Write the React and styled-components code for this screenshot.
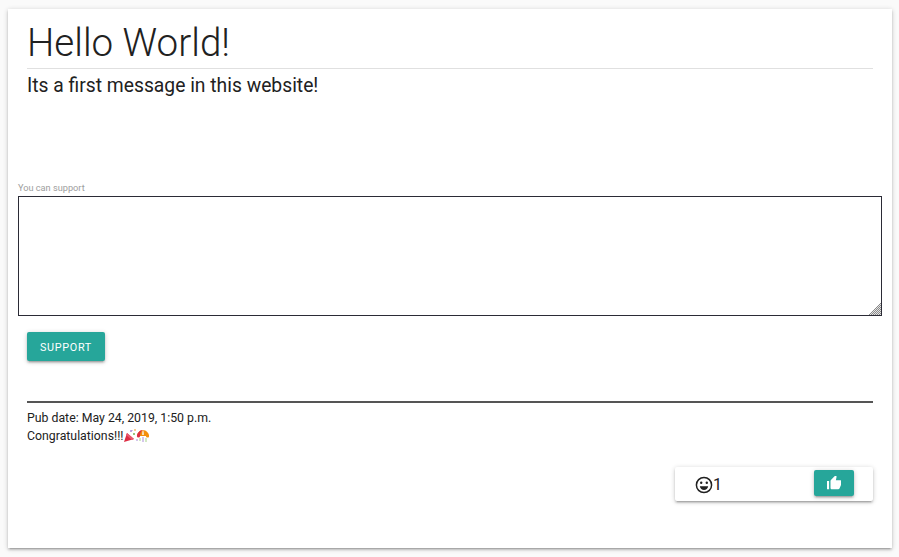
import React from 'react';
import styled, { createGlobalStyle } from 'styled-components';

const GlobalStyle = createGlobalStyle`
  html, body {
    margin: 0;
    padding: 0;
    background: #fafafa;
    color: rgba(0, 0, 0, 0.87);
    font-family: Roboto, "Liberation Sans", sans-serif;
    overflow: hidden;
  }
  * {
    box-sizing: border-box;
  }
`;

const Page = styled.div`
  width: 899px;
  height: 557px;
  padding: 9px 7px 9px 8px;
`;

const Card = styled.main`
  height: 539px;
  padding: 0 10px;
  background: #fff;
  box-shadow: 0 2px 2px 0 rgba(0, 0, 0, 0.14), 0 3px 1px -2px rgba(0, 0, 0, 0.12),
    0 1px 5px 0 rgba(0, 0, 0, 0.2);
`;

const Section = styled.section`
  padding: 0 9px;
`;

const Title = styled.h1`
  margin: 0;
  height: 60px;
  border-bottom: 1px solid #e0e0e0;
  font-size: 38.6px;
  font-weight: 300;
  line-height: 67px;
  color: #212121;
`;

const Lead = styled.p`
  margin: 0;
  height: 110px;
  font-size: 19.3px;
  font-weight: 400;
  line-height: 33px;
  color: #212121;
`;

const Label = styled.label`
  display: block;
  height: 17px;
  font-size: 9.2px;
  line-height: 17px;
  color: #9e9e9e;
`;

const Message = styled.textarea`
  display: block;
  width: 100%;
  height: 120px;
  margin: 0;
  padding: 0;
  background: #fff;
  border: 1px solid #2b2b36;
  border-radius: 0;
  outline: none;

  &::-webkit-resizer {
    background: linear-gradient(135deg, #fff 58%, transparent 58%),
      repeating-conic-gradient(#8a8a8a 0 25%, #e4e4e4 0 50%) 0 0 / 2px 2px;
  }
`;

const Button = styled.button`
  display: inline-flex;
  align-items: center;
  justify-content: center;
  padding: 0;
  border: 0;
  border-radius: 2px;
  background: #26a69a;
  color: #fff;
  box-shadow: 0 2px 2px 0 rgba(0, 0, 0, 0.14), 0 3px 1px -2px rgba(0, 0, 0, 0.12),
    0 1px 5px 0 rgba(0, 0, 0, 0.2);
`;

const SupportButton = styled(Button)`
  width: 78px;
  height: 29px;
  margin-top: 16px;
  padding-top: 1px;
  font-family: Roboto, sans-serif;
  font-size: 10.8px;
  letter-spacing: 0.7px;
  text-transform: uppercase;
`;

const Comment = styled.article`
  margin-top: 40px;
  padding-top: 6px;
  border-top: 2px solid #555;
  font-size: 12.3px;
  line-height: 18px;
  color: #212121;
`;

const CommentLine = styled.div`
  display: flex;
  align-items: center;
  height: 18px;
`;

const ReactionRow = styled.div`
  display: flex;
  justify-content: flex-end;
  margin-top: 22px;
`;

const ReactionCard = styled.div`
  display: flex;
  align-items: flex-start;
  justify-content: space-between;
  width: 198px;
  height: 34px;
  padding: 3px 19px 0 20px;
  border-radius: 2px;
  background: #fff;
  box-shadow: 0 2px 2px 0 rgba(0, 0, 0, 0.14), 0 3px 1px -2px rgba(0, 0, 0, 0.12),
    0 1px 5px 0 rgba(0, 0, 0, 0.2);
`;

const Count = styled.span`
  display: flex;
  align-items: center;
  height: 29px;
  font-size: 16px;
  color: #212121;
`;

const ThumbButton = styled(Button)`
  width: 40px;
  height: 26px;
`;

const Party = () => (
  <svg width="26" height="14" viewBox="0 0 26 14" aria-hidden="true">
    <path d="M1 13 4 4l7 6z" fill="#dd2e44" />
    <path d="M4 4l7 6-2 1-6-5z" fill="#ea596e" />
    <circle cx="8" cy="2" r="1" fill="#aa8dd8" />
    <circle cx="11" cy="5" r="1" fill="#77b255" />
    <circle cx="12" cy="1" r="0.8" fill="#f4900c" />
    <path d="M13 11h2M9 1v1" stroke="#aa8dd8" strokeWidth="1" />
    <path d="M14 7c0-3 3-6 6-6s6 3 6 6z" fill="#f4900c" />
    <path d="M14 7c0-3 3-6 6-6-2 1-3 3-3 6z" fill="#dd2e44" />
    <path d="M20 1c-1 1-1 3-1 5h2c0-2 0-4-1-5z" fill="#f7dcb5" />
    <circle cx="15.5" cy="7" r="1.6" fill="#dd2e44" />
    <circle cx="24.5" cy="7" r="1.6" fill="#f4900c" />
    <path d="M17 9v3M23 9v4" stroke="#a6d388" strokeWidth="1" />
    <path d="M20 8v5" stroke="#aa8dd8" strokeWidth="1" />
  </svg>
);

const Smile = () => (
  <svg width="18" height="18" viewBox="0 0 18 18" aria-hidden="true">
    <circle cx="9" cy="9" r="7.6" fill="none" stroke="#212121" strokeWidth="1.5" />
    <circle cx="6.2" cy="6.8" r="1.2" fill="#212121" />
    <circle cx="11.8" cy="6.8" r="1.2" fill="#212121" />
    <path d="M4.8 10.2h8.4c-.4 2.4-2.1 3.8-4.2 3.8s-3.8-1.4-4.2-3.8z" fill="#212121" />
  </svg>
);

const ThumbUp = () => (
  <svg width="14" height="14" viewBox="2 2 20 20" fill="#fff" aria-hidden="true">
    <path d="M1 21h4V9H1v12zm22-11c0-1.1-.9-2-2-2h-6.31l.95-4.57.03-.32c0-.41-.17-.79-.44-1.06L14.17 1 7.59 7.59C7.22 7.95 7 8.45 7 9v10c0 1.1.9 2 2 2h9c.83 0 1.54-.5 1.84-1.22l3.02-7.05c.09-.23.14-.47.14-.73v-2z" />
  </svg>
);

const App = () => (
  <Page>
    <GlobalStyle />
    <Card>
      <Section>
        <Title>Hello World!</Title>
        <Lead>Its a first message in this website!</Lead>
      </Section>
      <Label htmlFor="support">You can support</Label>
      <Message id="support" />
      <Section>
        <SupportButton type="button">Support</SupportButton>
        <Comment>
          <CommentLine>Pub date: May 24, 2019, 1:50 p.m.</CommentLine>
          <CommentLine>
            Congratulations!!!
            <Party />
          </CommentLine>
        </Comment>
        <ReactionRow>
          <ReactionCard>
            <Count>
              <Smile />1
            </Count>
            <ThumbButton type="button" aria-label="Like">
              <ThumbUp />
            </ThumbButton>
          </ReactionCard>
        </ReactionRow>
      </Section>
    </Card>
  </Page>
);

export default App;
